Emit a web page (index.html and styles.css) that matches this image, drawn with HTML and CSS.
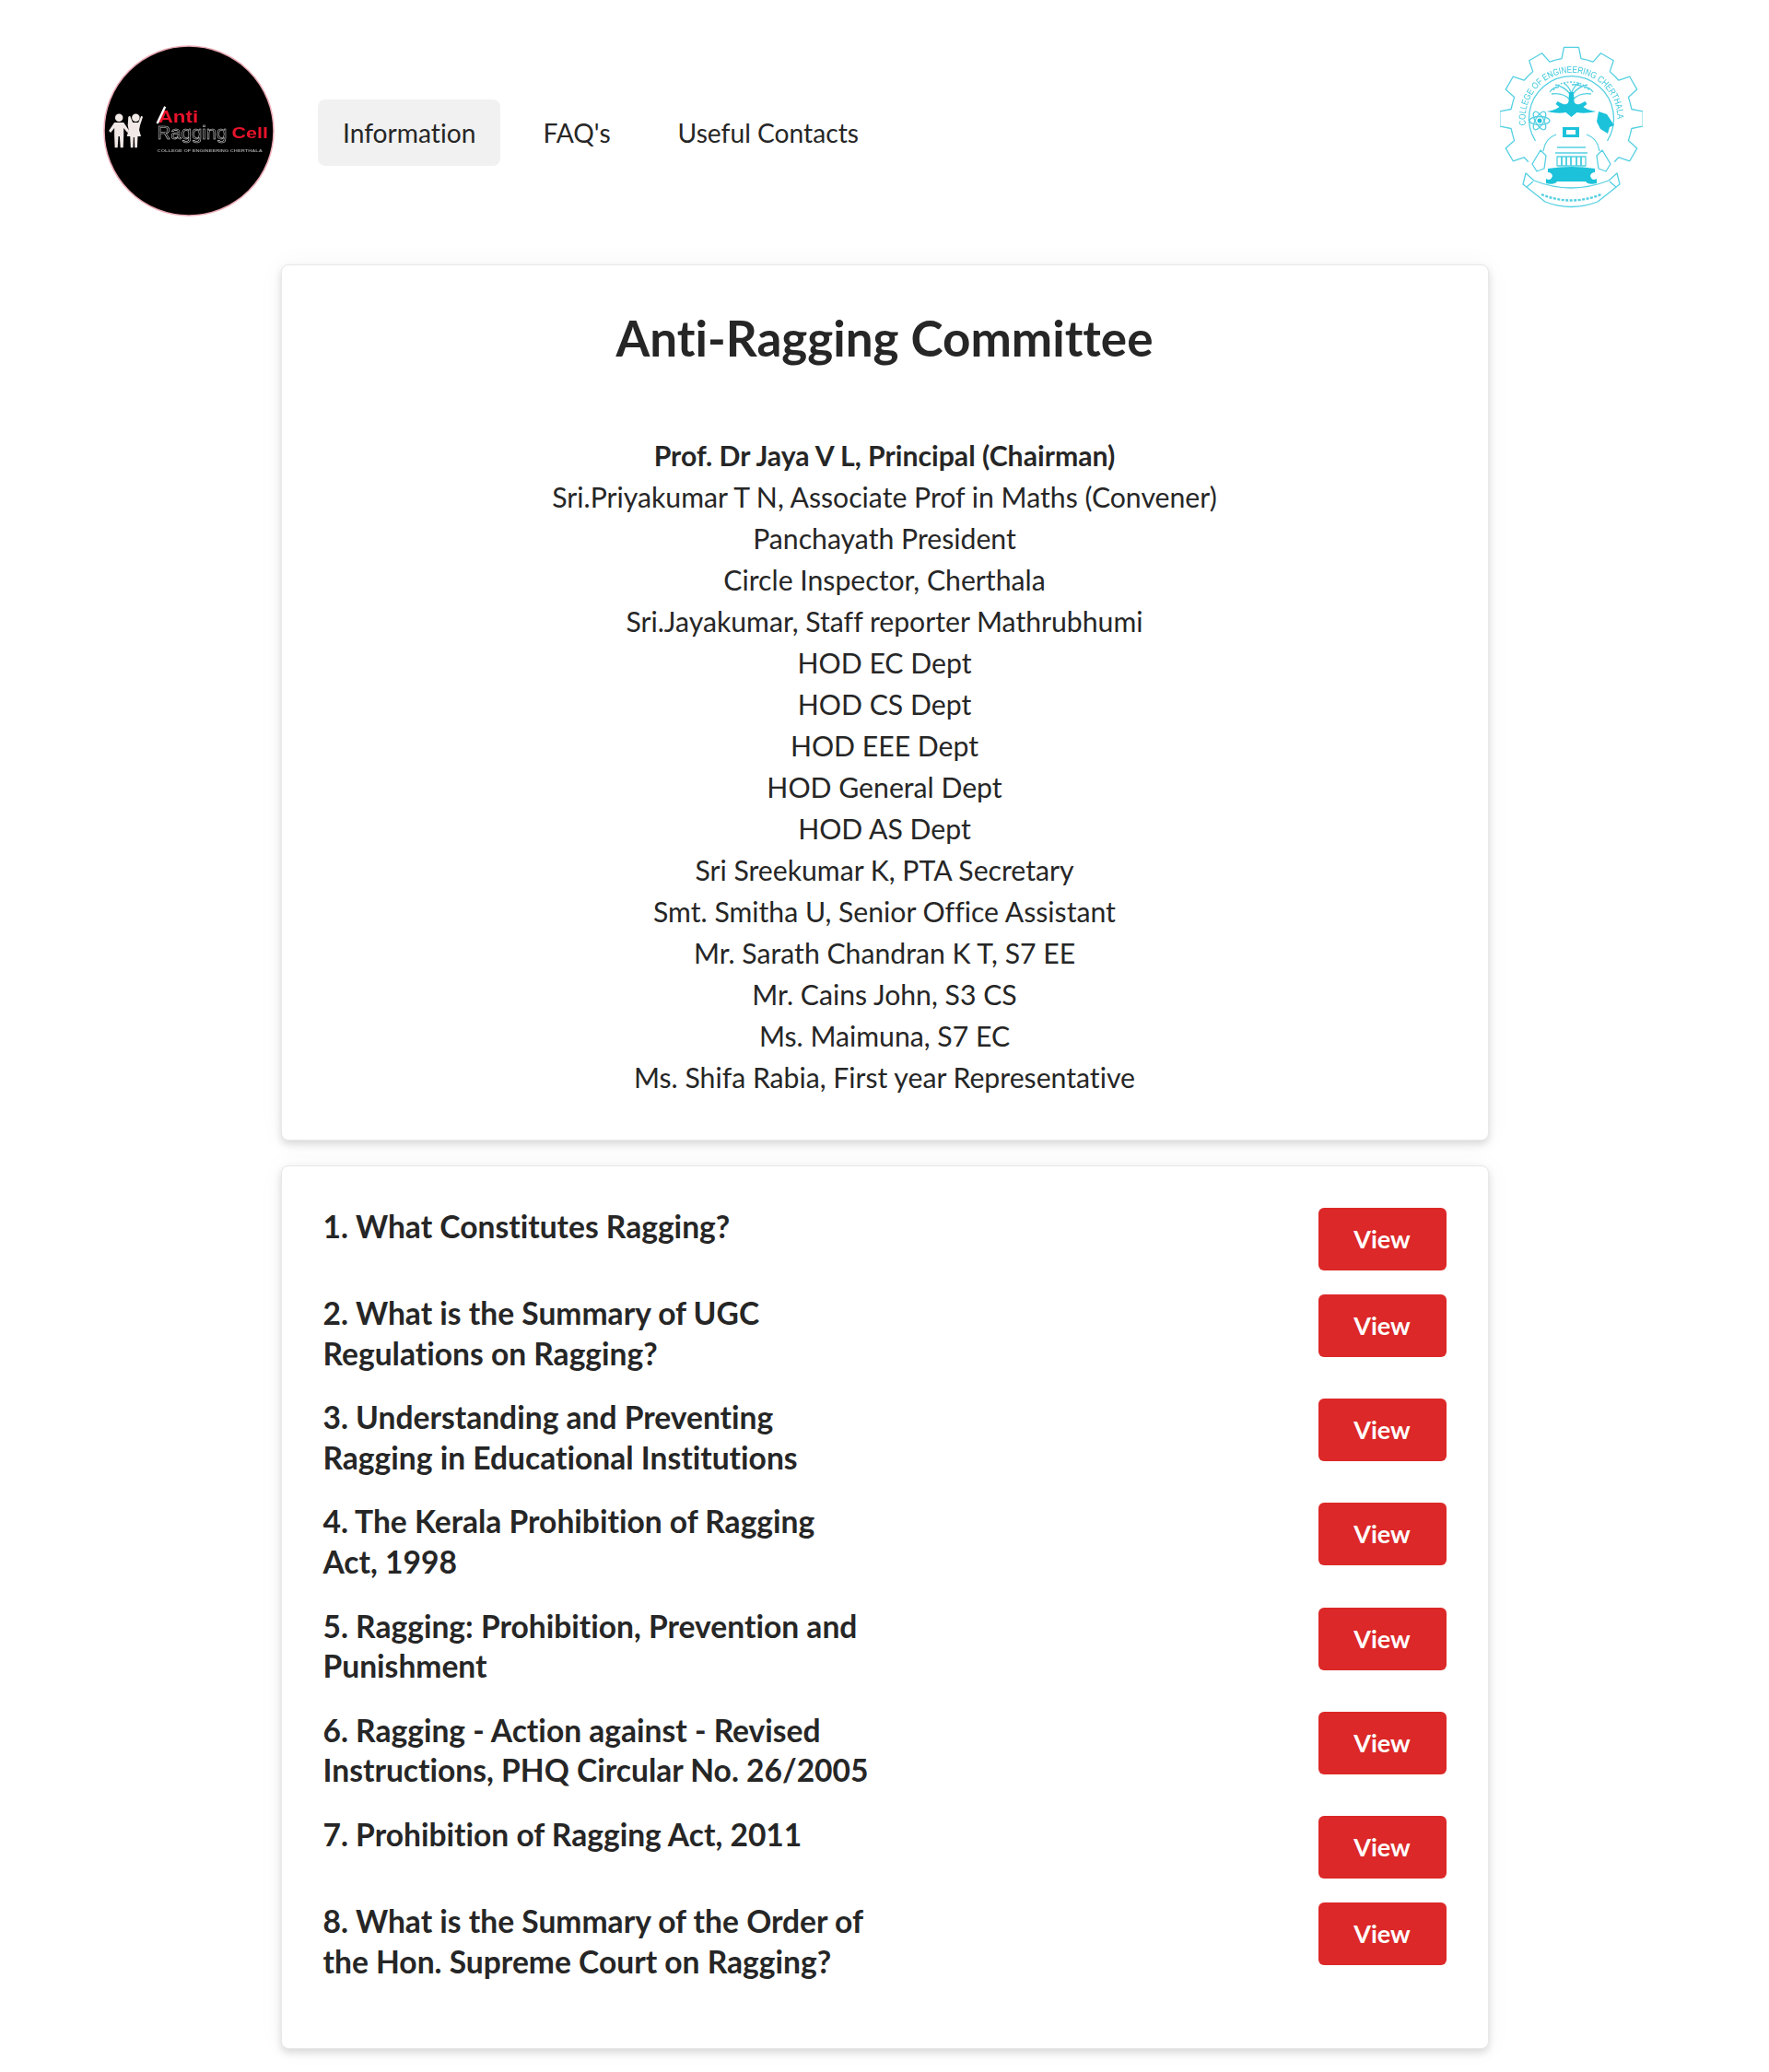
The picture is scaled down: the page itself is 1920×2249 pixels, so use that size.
FILE: index.html
```html
<!DOCTYPE html>
<html lang="en">

<head>
  <meta charset="UTF-8">
  <title>Anti Ragging Cell</title>
  <link rel="stylesheet" href="styles.css">
</head>

<body>
  <header class="topbar">
    <svg class="logo-cell" viewBox="0 0 184 184" aria-label="Anti Ragging Cell">
      <circle cx="92" cy="92" r="91" fill="#000" stroke="#e9a9b4" stroke-width="1.5"/>
      <g fill="#f1e9e6">
        <circle cx="17" cy="78" r="4.2"/>
        <path d="M12 83h10l6 9-2 2-4-5v8l-.5 13h-3l-.8-12h-1.4l-.8 12h-3l-.5-13v-8l-4 5-2-2z"/>
        <circle cx="35" cy="78" r="4.2"/>
        <path d="M27 77l1.800-1 3 7h6l3-7 1.800 1-3 9-1 5 2 7h-3.500l-.6 12h-2.600l-.4-11h-1l-.4 11h-2.600l-.6-12h-3.500l2-7-1-5z"/>
      </g>
      <text class="logo-anti" x="59" y="83" textLength="43" lengthAdjust="spacingAndGlyphs">Anti</text>
      <path d="M58 84l8.500-18" stroke="#fff" stroke-width="2.400" fill="none"/>
      <text class="logo-rag" x="58" y="101" textLength="75" lengthAdjust="spacingAndGlyphs">Ragging</text>
      <text class="logo-red" x="138" y="100" textLength="39" lengthAdjust="spacingAndGlyphs">Cell</text>
      <text class="logo-small" x="58" y="115" textLength="113" lengthAdjust="spacingAndGlyphs">COLLEGE OF ENGINEERING CHERTHALA</text>
    </svg>

    <nav class="menu">
      <a class="menu-item active" href="#">Information</a>
      <a class="menu-item" href="#">FAQ's</a>
      <a class="menu-item" href="#">Useful Contacts</a>
    </nav>

    <svg class="logo-college" viewBox="0 0 155 180" aria-label="College of Engineering Cherthala">
      <defs>
        <path id="tooth" d="M-17.100-63.800L-10.500-65.400-8-77.700H8L10.500-65.400 17.100-63.800"/>
        <path id="ringtext" d="M28 86A50 50 0 1 1 127 86"/>
      </defs>
      <g fill="none" stroke="#55d0e2" stroke-width="1.300" stroke-linejoin="round">
        <g transform="translate(77.500 79)">
          <use href="#tooth"/>
          <use href="#tooth" transform="rotate(30)"/>
          <use href="#tooth" transform="rotate(60)"/>
          <use href="#tooth" transform="rotate(90)"/>
          <use href="#tooth" transform="rotate(120)"/>
          <use href="#tooth" transform="rotate(-30)"/>
          <use href="#tooth" transform="rotate(-60)"/>
          <use href="#tooth" transform="rotate(-90)"/>
          <use href="#tooth" transform="rotate(-120)"/>
          <path d="M-39 24A46 46 0 1 1 39 24"/>
        </g>
        <path d="M28 138l-3 12 24 19q28 11 57 0l24-19-3-12-9 8q-41 16-81 0z"/>
        <path d="M36 147l-7 6M119 147l7 6"/>
        <path d="M45 161q32 13 65 0" stroke-dasharray="3 1.500" stroke-width="2.400"/>
        <ellipse cx="43" cy="81" rx="11" ry="4.500" transform="rotate(60 43 81)"/>
        <ellipse cx="43" cy="81" rx="11" ry="4.500" transform="rotate(-60 43 81)"/>
        <ellipse cx="43" cy="81" rx="11" ry="4.500"/>
        <path d="M76 58q-8-8-20-6M76 52q-6-8-16-10M77 50q-2-6-8-10M78 50q2-6 8-10M79 52q6-8 16-10M79 58q8-8 20-6M54 50q4-6 10-5M90 44q-6-3-12-2M101 50q-4-6-10-5"/>
        <path d="M58 48q6-9 19-9t20 9" stroke-dasharray="2 1.500"/>
        <path d="M61 96q-12 4-14 18M94 96q12 4 14 18"/>
        <path d="M62 110h31M60 116h35"/>
        <path d="M62 120h31v10H62z"/>
        <path d="M67 120v10M72 120v10M77 120v10M83 120v10M88 120v10" stroke-width="2"/>
        <path d="M44 113l6 6-2 14-8 3-5-8zM111 113l-6 6 2 14 8 3 5-8z"/>
      </g>
      <text class="logo-ring"><textPath href="#ringtext" textLength="164" lengthAdjust="spacingAndGlyphs">COLLEGE OF ENGINEERING CHERTHALA</textPath></text>
      <g fill="#1cc2da">
        <path d="M75 50h5l.5 10q1 4 6 3l6-3 2 3-4 3q5 4 14 5-13 3-21 1l-6 5-6-5q-8 2-21-1 9-1 14-5l-4-3 2-3 6 3q5 1 6-3z"/>
        <path d="M107 71l9 3 8 12-5 2-2 7-8-5-4-8z"/>
        <path d="M68 88h18v11H68zM72 91v5h10v-5z" fill-rule="evenodd"/>
        <circle cx="43" cy="81" r="2.500"/>
        <path d="M52 133q26-4 51 0v4q-4 0-5 4 2 6 7 3v5q-9 2-12-2H62q-3 4-12 2v-5q5 3 7-3-1-4-5-4z"/>
      </g>
    </svg>
  </header>

  <main class="page">
    <section class="card committee">
      <h1>Anti-Ragging Committee</h1>
      <ul class="members">
        <li class="chair">Prof. Dr Jaya V L, Principal (Chairman)</li>
        <li>Sri.Priyakumar T N, Associate Prof in Maths (Convener)</li>
        <li>Panchayath President</li>
        <li>Circle Inspector, Cherthala</li>
        <li>Sri.Jayakumar, Staff reporter Mathrubhumi</li>
        <li>HOD EC Dept</li>
        <li>HOD CS Dept</li>
        <li>HOD EEE Dept</li>
        <li>HOD General Dept</li>
        <li>HOD AS Dept</li>
        <li>Sri Sreekumar K, PTA Secretary</li>
        <li>Smt. Smitha U, Senior Office Assistant</li>
        <li>Mr. Sarath Chandran K T, S7 EE</li>
        <li>Mr. Cains John, S3 CS</li>
        <li>Ms. Maimuna, S7 EC</li>
        <li>Ms. Shifa Rabia, First year Representative</li>
      </ul>
    </section>

    <section class="card docs">
      <div class="doc"><h2>1. What Constitutes Ragging?</h2><a class="btn" href="#">View</a></div>
      <div class="doc"><h2>2. What is the Summary of UGC Regulations on Ragging?</h2><a class="btn" href="#">View</a></div>
      <div class="doc"><h2>3. Understanding and Preventing Ragging in Educational Institutions</h2><a class="btn" href="#">View</a></div>
      <div class="doc"><h2>4. The Kerala Prohibition of Ragging Act, 1998</h2><a class="btn" href="#">View</a></div>
      <div class="doc"><h2>5. Ragging: Prohibition, Prevention and Punishment</h2><a class="btn" href="#">View</a></div>
      <div class="doc"><h2>6. Ragging - Action against - Revised Instructions, PHQ Circular No. 26/2005</h2><a class="btn" href="#">View</a></div>
      <div class="doc"><h2>7. Prohibition of Ragging Act, 2011</h2><a class="btn" href="#">View</a></div>
      <div class="doc"><h2>8. What is the Summary of the Order of the Hon. Supreme Court on Ragging?</h2><a class="btn" href="#">View</a></div>
    </section>
  </main>
</body>

</html>
```

FILE: styles.css
```css
html {
  background: #fff;
  font-family: Lato, 'Open Sans', sans-serif;
  color: #262626;
  font-variant-ligatures: none;
}

body {margin: 0;}

/* top bar */
.topbar {
  display: flex;
  align-items: center;
  padding: 49px 137px 0 112px;
}

.logo-cell {width: 186px;height: 186px;filter: blur(.4px);}

.logo-college {width: 155px;height: 180px;margin: 0 0 4px auto;filter: blur(.3px);}

.logo-anti {font: 700 18px 'Liberation Sans', sans-serif;fill: #e8132a;}
.logo-rag {font: 400 20px 'Liberation Sans', sans-serif;fill: none;stroke: #ddd;stroke-width: .5px;}
.logo-red {font: 700 16px 'Liberation Sans', sans-serif;fill: #e8132a;}
.logo-small {font: 700 4.2px 'Liberation Sans', sans-serif;fill: #999;}
.logo-ring {font: 400 10px 'Liberation Sans', sans-serif;fill: #3cc8dc;}

.menu {
  display: flex;
  gap: 19px;
  margin: 4px 0 0 47px;
}

.menu-item {
  padding: 0 27px;
  line-height: 72px;
  font-size: 28.200px;
  color: #262626;
  text-decoration: none;
  border-radius: 8px;
}

.menu-item.active {background: #f1f1f1;}

/* cards */
.page {
  width: 1311px;
  margin: 52px auto 0;
  padding-bottom: 26px;
}

.card {
  background: #fff;
  border: 1px solid #e8e8e8;
  border-radius: 8px;
  box-shadow: 0 4px 9px rgba(0,0,0,.14), 0 0 30px rgba(0,0,0,.04);
}

.committee {
  height: 951px;
  box-sizing: border-box;
  text-align: center;
  padding-top: 45px;
}

.committee h1 {
  margin: 0;
  font-size: 53px;
  line-height: 68px;
  font-weight: 700;
}

.members {
  list-style: none;
  margin: 71px 0 0;
  padding: 0;
  font-size: 30.200px;
  line-height: 45px;
}

.chair {font-weight: 700;}

.docs {
  display: flex;
  flex-direction: column;
  gap: 26px;
  margin-top: 27px;
  padding: 45px 45px 71px;
}

.doc {
  display: flex;
  justify-content: space-between;
  align-items: flex-start;
}

.doc h2 {
  width: 600px;
  margin: -1px 0 1px;
  font-size: 33.600px;
  line-height: 43.600px;
  font-weight: 700;
}

.btn {
  width: 139px;
  height: 68px;
  line-height: 68px;
  text-align: center;
  background: #dc2828;
  color: #fff;
  font-size: 27px;
  font-weight: 700;
  text-decoration: none;
  border-radius: 6px;
}
```
